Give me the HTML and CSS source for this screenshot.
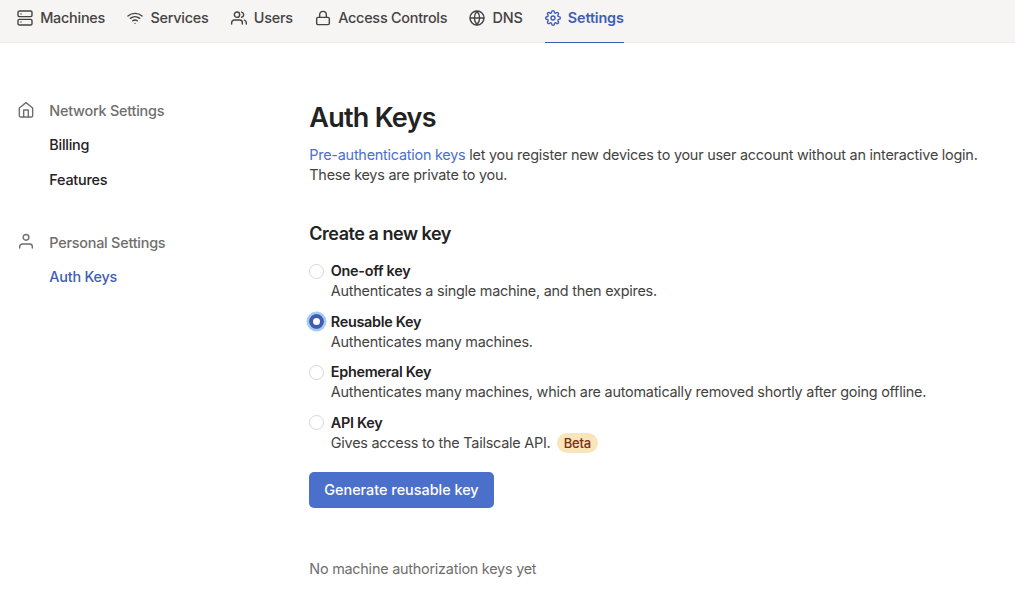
FILE: index.html
```html
<!DOCTYPE html>
<html lang="en">
<head>
<meta charset="utf-8">
<title>Auth Keys</title>
<link rel="stylesheet" href="styles.css">
</head>
<body>
<header class="topbar">
  <nav class="nav">
    <a class="nav-item"><svg class="icon" viewBox="0 0 24 24"><rect x="1.500" y="1.500" width="21" height="8.500" rx="2"/><rect x="1.500" y="14" width="21" height="8.500" rx="2"/><path d="M6 6h.01M6 18h.01"/></svg><span>Machines</span></a>
    <a class="nav-item"><svg class="icon" viewBox="0 0 24 24"><path d="M5 12.55a11 11 0 0 1 14.08 0M1.42 9a16 16 0 0 1 21.16 0M8.53 16.11a6 6 0 0 1 6.95 0M12 20h.01"/></svg><span>Services</span></a>
    <a class="nav-item"><svg class="icon" viewBox="0 0 24 24"><path d="M17 21v-2a4 4 0 0 0-4-4H5a4 4 0 0 0-4 4v2"/><circle cx="9" cy="7" r="4"/><path d="M23 21v-2a4 4 0 0 0-3-3.87M16 3.13a4 4 0 0 1 0 7.75"/></svg><span>Users</span></a>
    <a class="nav-item"><svg class="icon" viewBox="0 0 24 24"><rect x="2.500" y="11" width="19" height="11" rx="2"/><path d="M7 11V7a5 5 0 0 1 10 0v4"/></svg><span>Access Controls</span></a>
    <a class="nav-item"><svg class="icon" viewBox="0 0 24 24"><circle cx="12" cy="12" r="10.500"/><path d="M2 12h20M12 2a15.3 15.3 0 0 1 4 10 15.3 15.3 0 0 1-4 10 15.3 15.3 0 0 1-4-10 15.3 15.3 0 0 1 4-10z"/></svg><span>DNS</span></a>
    <a class="nav-item nav-item-active"><svg class="icon" viewBox="0 0 24 24"><circle cx="12" cy="12" r="3"/><path d="M19.4 15a1.65 1.65 0 0 0 .33 1.82l.06.06a2 2 0 0 1 0 2.83 2 2 0 0 1-2.83 0l-.06-.06a1.65 1.65 0 0 0-1.82-.33 1.65 1.65 0 0 0-1 1.51V21a2 2 0 0 1-2 2 2 2 0 0 1-2-2v-.09A1.65 1.65 0 0 0 9 19.4a1.65 1.65 0 0 0-1.82.33l-.06.06a2 2 0 0 1-2.83 0 2 2 0 0 1 0-2.83l.06-.06a1.65 1.65 0 0 0 .33-1.82 1.65 1.65 0 0 0-1.51-1H3a2 2 0 0 1-2-2 2 2 0 0 1 2-2h.09A1.65 1.65 0 0 0 4.6 9a1.65 1.65 0 0 0-.33-1.82l-.06-.06a2 2 0 0 1 0-2.83 2 2 0 0 1 2.83 0l.06.06a1.65 1.65 0 0 0 1.82.33H9a1.65 1.65 0 0 0 1-1.51V3a2 2 0 0 1 2-2 2 2 0 0 1 2 2v.09a1.65 1.65 0 0 0 1 1.51 1.65 1.65 0 0 0 1.82-.33l.06-.06a2 2 0 0 1 2.83 0 2 2 0 0 1 0 2.83l-.06.06a1.65 1.65 0 0 0-.33 1.82V9a1.65 1.65 0 0 0 1.51 1H21a2 2 0 0 1 2 2 2 2 0 0 1-2 2h-.09a1.65 1.65 0 0 0-1.51 1z"/></svg><span>Settings</span></a>
  </nav>
</header>
<div class="layout">
  <aside class="sidebar">
    <section class="group">
      <div class="group-title"><svg class="icon" viewBox="0 0 24 24"><path d="M2 9l10-8 10 8v11.500a2 2 0 0 1-2 2H4a2 2 0 0 1-2-2z"/><path d="M8.500 22.500V12h7v10.500"/></svg><span>Network Settings</span></div>
      <a class="side-link">Billing</a>
      <a class="side-link side-link-last">Features</a>
    </section>
    <section class="group">
      <div class="group-title"><svg class="icon" viewBox="0 0 24 24"><path d="M21.500 21v-2a4 4 0 0 0-4-4h-11a4 4 0 0 0-4 4v2"/><circle cx="12" cy="5" r="4.300"/></svg><span>Personal Settings</span></div>
      <a class="side-link side-link-active">Auth Keys</a>
    </section>
  </aside>
  <main class="main">
    <h1 class="title">Auth Keys</h1>
    <p class="intro"><a class="link">Pre-authentication keys</a> let you register new devices to your user account without an interactive login.<br>These keys are private to you.</p>
    <h2 class="subtitle">Create a new key</h2>
    <div class="options">
      <label class="option"><span class="radio"></span><span class="option-text"><strong class="option-name">One-off key</strong><span>Authenticates a single machine, and then expires.</span></span></label>
      <label class="option"><span class="radio radio-checked"></span><span class="option-text"><strong class="option-name">Reusable Key</strong><span>Authenticates many machines.</span></span></label>
      <label class="option"><span class="radio"></span><span class="option-text"><strong class="option-name">Ephemeral Key</strong><span>Authenticates many machines, which are automatically removed shortly after going offline.</span></span></label>
      <label class="option"><span class="radio"></span><span class="option-text"><strong class="option-name">API Key</strong><span class="option-desc">Gives access to the Tailscale API.<span class="badge">Beta</span></span></span></label>
    </div>
    <button class="button">Generate reusable key</button>
    <p class="empty">No machine authorization keys yet</p>
  </main>
</div>
</body>
</html>
```
FILE: styles.css
```css
* { box-sizing: border-box; }
body {
  margin: 0;
  height: 597px;
  overflow: hidden;
  background: #fff;
  color: #444342;
  font: 400 14.4px/20px Inter, sans-serif;
  letter-spacing: -0.23px;
}
h1, h2, p { margin: 0; }
.icon {
  flex: none;
  width: 16px;
  height: 16px;
  overflow: visible;
  fill: none;
  stroke: currentColor;
  stroke-width: 2.100;
  stroke-linecap: round;
  stroke-linejoin: round;
}
.topbar {
  height: 43px;
  background: #f6f5f4;
  border-bottom: 1px solid #eeebea;
}
.nav {
  display: flex;
  gap: 22.200px;
  padding-left: 17px;
  letter-spacing: -0.24px;
}
.nav-item {
  display: flex;
  align-items: center;
  gap: 7.200px;
  height: 43px;
  padding-bottom: 6px;
  border-bottom: 1px solid transparent;
  font-weight: 500;
  white-space: nowrap;
}
.nav-item-active {
  color: #3f5db3;
  border-bottom-color: #3f5db3;
  font-weight: 600;
  letter-spacing: -0.15px;
}
.layout {
  display: grid;
  grid-template-columns: 292px 680px;
  padding: 58px 0 0 17.300px;
}
.group { margin-bottom: 43px; font-weight: 500; }
.group-title {
  display: flex;
  gap: 15.500px;
  height: 20px;
  padding-left: 0.5px;
  color: #706e6d;
}
.group-title .icon { margin-top: 1px; }
.side-link {
  display: block;
  margin: 14px 0 0 32px;
  color: #232222;
}
.side-link-last { margin-top: 15px; }
.side-link-active { color: #3f5db3; }
.title {
  color: #232222;
  font-size: 27px;
  line-height: 34px;
  font-weight: 600;
  letter-spacing: -0.75px;
}
.intro { margin-top: 10px; }
.link { color: #4b70cc; }
.subtitle {
  margin-top: 36px;
  color: #232222;
  font-size: 18px;
  line-height: 25px;
  font-weight: 600;
  letter-spacing: -0.47px;
}
.options {
  display: grid;
  gap: 10.500px;
  margin: 15px 0 0 -0.3px;
}
.option { display: flex; gap: 6.800px; }
.radio {
  flex: none;
  width: 15px;
  height: 15px;
  margin-top: 2.500px;
  border: 1px solid #dad6d5;
  border-radius: 50%;
}
.radio-checked {
  border: 4px solid #3f5db3;
  box-shadow: 0 0 0 2.500px #a5cdf2;
}
.option-text { display: grid; }
.option-name { color: #232222; font-weight: 600; letter-spacing: -0.28px; }
.option-desc { display: flex; align-items: center; gap: 6.300px; }
.badge {
  padding: 0 7px;
  border-radius: 10px;
  background: #f8e5b9;
  color: #7c2d12;
  font-size: 13px;
  font-weight: 500;
}
.button {
  display: block;
  height: 36px;
  margin: 19px 0 0 -0.3px;
  padding: 0 15.300px;
  border: 0;
  border-radius: 5px;
  background: #4b70cc;
  color: #fff;
  font: 500 14.4px/20px Inter, sans-serif;
}
.empty { margin-top: 51px; color: #706e6d; }
```
